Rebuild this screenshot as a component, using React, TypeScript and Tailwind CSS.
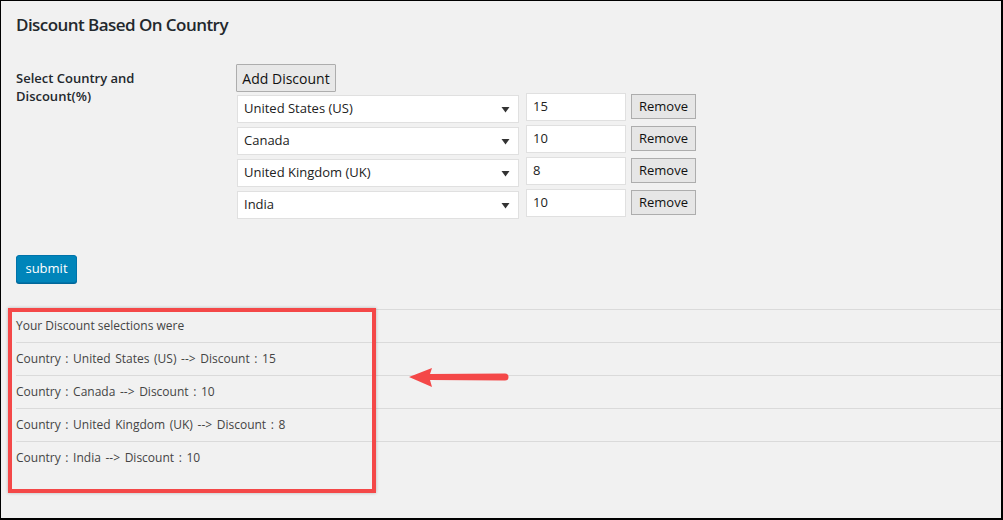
const rows = [
  { country: "United States (US)", discount: "15" },
  { country: "Canada", discount: "10" },
  { country: "United Kingdom (UK)", discount: "8" },
  { country: "India", discount: "10" },
];

function ArrowDown() {
  return (
    <svg width="9" height="7" viewBox="0 0 9 7" className="shrink-0">
      <path d="M0.5 1h8L4.5 6.5z" fill="#333" />
    </svg>
  );
}

export default function App() {
  return (
    <div
      className="relative w-[1003px] h-[520px] overflow-hidden bg-[#f1f1f1] border-t border-l border-r-2 border-b-2 border-black text-[#23282d]"
      style={{ fontFamily: '"Open Sans", "Noto Sans", sans-serif' }}
    >
      <h1 className="pl-[15px] pt-[12px] text-[17px] leading-[24px] font-semibold tracking-[-0.55px]">
        Discount Based On Country
      </h1>

      <div className="flex pl-[15px] mt-[27px]">
        <div className="w-[220px] pt-[5px] text-[13px] leading-[18px] font-semibold">
          Select Country and
          <br />
          Discount(%)
        </div>
        <div className="flex flex-col">
          <button className="w-[100px] h-[28px] border border-[#adadad] bg-[#e8e8e8] text-[14px] text-[#111] rounded-[1px]">
            Add Discount
          </button>
          <div className="flex flex-col gap-[4px] mt-[3px]">
            {rows.map((r) => (
              <div key={r.country} className="flex items-start">
                <div className="ml-[1px] w-[282px] h-[28px] bg-white border border-[#e0e0e0] flex items-center justify-between pl-[6px] pr-[8px] text-[13px] text-[#222]">
                  <span>{r.country}</span>
                  <ArrowDown />
                </div>
                <div className="ml-[7px] -mt-[2px] w-[100px] h-[28px] bg-white border border-[#e0e0e0] flex items-center pl-[6px] text-[13px] text-[#222]">
                  {r.discount}
                </div>
                <button className="ml-[5px] -mt-[1px] w-[65px] h-[25px] border border-[#adadad] bg-[#e6e6e6] text-[13px] text-[#111]">
                  Remove
                </button>
              </div>
            ))}
          </div>
        </div>
      </div>

      <div className="pl-[15px] mt-[36px]">
        <button className="w-[61px] h-[28px] rounded-[3px] bg-[#0085ba] border border-[#0073aa] text-white text-[13px] shadow-[0_1px_0_#006799]">
          submit
        </button>
      </div>

      <div className="ml-[15px] mt-[26px] text-[12px] text-[#444]">
        <div className="h-[33px] border-t border-[#dadada] flex items-center">
          Your Discount selections were
        </div>
        {rows.map((r) => (
          <div
            key={r.country}
            className="h-[33px] border-t border-[#dadada] flex items-center [word-spacing:1.5px]"
          >
            Country : {r.country} --&gt; Discount : {r.discount}
          </div>
        ))}
      </div>

      <div className="absolute left-[7px] top-[307px] w-[368px] h-[185px] border-[4px] border-[#f44848] shadow-[0_0_3px_rgba(0,0,0,0.25)]" />

      <svg
        className="absolute left-[405px] top-[364px]"
        width="106"
        height="26"
        viewBox="0 0 106 26"
      >
        <path d="M3 12 L26 3 L24 9 L99 8.5 A3.5 3.5 0 0 1 99 15.5 L24 15 L26 22 Z" fill="#f44848" />
      </svg>
    </div>
  );
}
